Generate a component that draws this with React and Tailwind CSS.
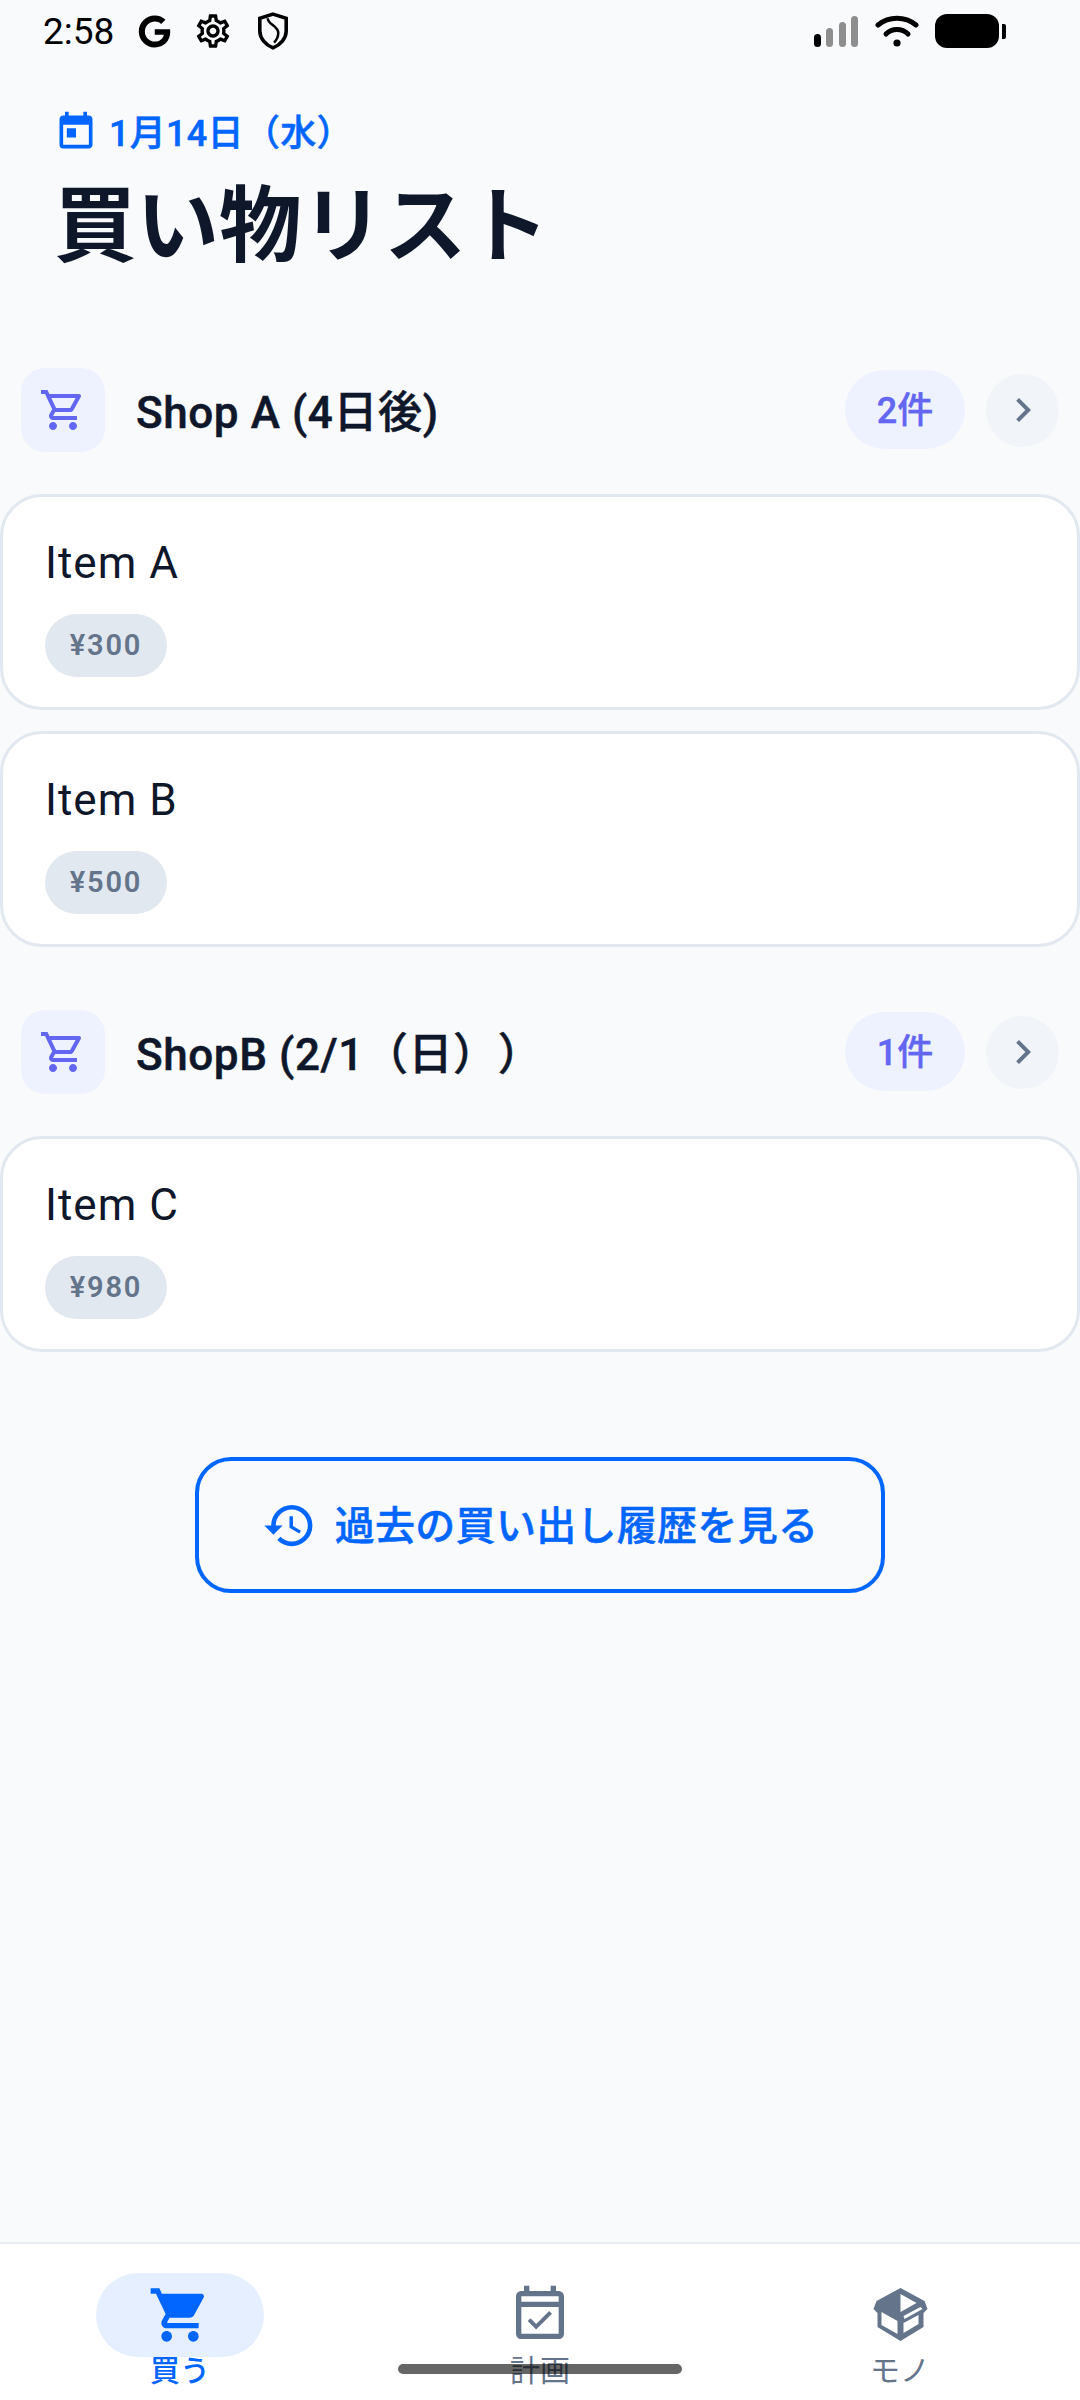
import { MdToday, MdOutlineShoppingCart, MdShoppingCart, MdChevronRight, MdHistory, MdOutlineEventAvailable, MdOutlineSettings } from "react-icons/md"
import { FaGoogle } from "react-icons/fa"

const sections = [
  { shop: "Shop A (4日後)", count: "2件", items: [{ name: "Item A", price: "¥300" }, { name: "Item B", price: "¥500" }] },
  { shop: "ShopB (2/1（日））", count: "1件", items: [{ name: "Item C", price: "¥980" }] },
]

function StatusBar() {
  return (
    <div className="flex items-center justify-between h-[62px] pl-[43px] pr-[74px] text-black">
      <div className="flex items-center">
        <span className="text-[37px] leading-none">2:58</span>
        <FaGoogle className="ml-[24px] text-[33px]" />
        <MdOutlineSettings className="ml-[22px] text-[40px]" />
        <svg className="ml-[24px]" width="32" height="38" viewBox="0 0 30 36" fill="none" stroke="black" strokeWidth="3.4">
          <path d="M15 2 L27.5 6 V18 C27.5 25 22 31 15 34 C8 31 2.5 25 2.5 18 V6 Z" />
          <path d="M10 6 C10 12 20 13 20 20 C20 24 18 27 16 29" strokeWidth="2.4" />
        </svg>
      </div>
      <div className="flex items-center">
        <svg width="46" height="33" viewBox="0 0 46 33">
          <rect x="1" y="19" width="7" height="13" rx="3.5" fill="#000" />
          <rect x="13" y="13" width="7" height="19" rx="3.5" fill="#8e8e8e" />
          <rect x="26" y="7" width="7" height="25" rx="3.5" fill="#8e8e8e" />
          <rect x="38" y="1" width="7" height="31" rx="3.5" fill="#8e8e8e" />
        </svg>
        <svg className="ml-[16px]" width="44" height="33" viewBox="0 0 44 33" fill="none" stroke="#000" strokeWidth="5" strokeLinecap="round">
          <path d="M3 10 C14 1 30 1 41 10" />
          <path d="M11 19 C17 13 27 13 33 19" />
          <circle cx="22" cy="28" r="3.6" fill="#000" stroke="none" />
        </svg>
        <div className="ml-[16px] w-[64px] h-[34px] rounded-[12px] bg-black" />
        <div className="ml-[3px] w-[4px] h-[15px] rounded-r-[2px] bg-black" />
      </div>
    </div>
  )
}

function SectionHeader({ shop, count }) {
  return (
    <div className="flex items-center h-[84px] pl-[21px] pr-[21px] mb-[42px]">
      <div className="flex items-center justify-center w-[84px] h-[84px] rounded-[24px] bg-[#eef2ff] text-[#6366f1]">
        <MdOutlineShoppingCart className="text-[48px]" />
      </div>
      <h2 className="ml-[31px] pt-[6px] flex-1 text-[44px] font-medium [-webkit-text-stroke:0.5px] tracking-[0.6px] leading-none text-[#0f172a]">{shop}</h2>
      <span className="flex items-center justify-center w-[120px] h-[79px] mb-[1px] pt-[3px] rounded-full bg-[#eef2ff] text-[36px] font-medium [-webkit-text-stroke:0.4px] text-[#6366f1]">{count}</span>
      <span className="ml-[21px] flex items-center justify-center w-[73px] h-[73px] rounded-full bg-[#f1f5f9] text-[#64748b]">
        <MdChevronRight className="text-[48px]" />
      </span>
    </div>
  )
}

function ItemCard({ name, price }) {
  return (
    <div className="h-[216px] bg-white border-[3px] border-[#e2e8f0] rounded-[42px] pl-[42px] pt-[41px]">
      <p className="text-[44px] leading-[50px] tracking-[1px] text-[#0f172a]">{name}</p>
      <span className="mt-[26px] flex items-center justify-center w-[122px] h-[63px] rounded-full bg-[#e2e8f0] text-[29px] font-semibold tracking-[1.8px] text-[#64748b]">{price}</span>
    </div>
  )
}

function NavItem({ icon, label, active }) {
  return (
    <div className={`flex flex-col items-center w-[168px] ${active ? "text-[#0066ff]" : "text-[#64748b]"}`}>
      <div className={`flex items-center justify-center w-[168px] h-[84px] rounded-full ${active ? "bg-[#e5efff]" : ""}`}>
        {icon}
      </div>
      <span className={`text-[30px] leading-[28px] ${active ? "font-medium" : "font-normal"}`}>{label}</span>
    </div>
  )
}

function BoxIcon() {
  return (
    <svg width="57" height="54" viewBox="0 0 56 54">
      <path fill="#64748b" d="M28 0 L52 13 L55 21 L51 25 V39 L28 53 L5 39 V25 L1 21 L4 13 Z" />
      <path fill="#fff" d="M28 6 L44 15 L28 24 Z" />
      <path fill="#fff" d="M9 24 L25 33 V46 L9 37 Z" />
      <path fill="#fff" d="M31 35 L46 27 V36 L31 45 Z" />
      <path fill="#fff" d="M31 28 L48 19 L50 21 L32 31 Z" />
    </svg>
  )
}

export default function App() {
  return (
    <div className="relative flex flex-col h-[2400px] bg-[#f8fafc] font-['Roboto','Noto_Sans_CJK_JP',sans-serif] [text-spacing-trim:space-all]">
      <StatusBar />

      <header className="pl-[54px] pt-[54px]">
        <div className="flex items-center h-[36px] text-[#0066ff]">
          <MdToday className="text-[44px] -mt-[4px]" />
          <span className="ml-[11px] text-[36px] font-medium [-webkit-text-stroke:0.5px] tracking-[0.3px]">1月14日（水）</span>
        </div>
        <h1 className="mt-[29px] text-[82.5px] leading-[92px] font-bold text-[#0f172a]">買い物リスト</h1>
      </header>

      <main className="mt-[95px] flex-1">
        {sections.map(section => (
          <section key={section.shop} className="mb-[63px]">
            <SectionHeader shop={section.shop} count={section.count} />
            <div className="flex flex-col gap-[21px]">
              {section.items.map(item => (
                <ItemCard key={item.name} name={item.name} price={item.price} />
              ))}
            </div>
          </section>
        ))}

        <div className="flex justify-center mt-[105px]">
          <button className="flex items-center justify-center w-[690px] h-[136px] border-[4px] border-[#0066ff] rounded-[36px] text-[#0066ff] text-[40px] font-medium [-webkit-text-stroke:0.5px] tracking-[0.3px]">
            <MdHistory className="text-[55px]" />
            <span className="ml-[18px] pt-[3px]">過去の買い出し履歴を見る</span>
          </button>
        </div>
      </main>

      <nav className="flex justify-between h-[158px] bg-white border-t-2 border-[#e8ecf3] pt-[29px] pl-[96px] pr-[96px]">
        <NavItem active label="買う" icon={<MdShoppingCart className="text-[64px]" />} />
        <NavItem label="計画" icon={<MdOutlineEventAvailable className="text-[64px]" />} />
        <NavItem label="モノ" icon={<BoxIcon />} />
      </nav>

      <div className="absolute bottom-[26px] left-[398px] w-[284px] h-[10px] rounded-full bg-[#000000]/60" />
    </div>
  )
}
